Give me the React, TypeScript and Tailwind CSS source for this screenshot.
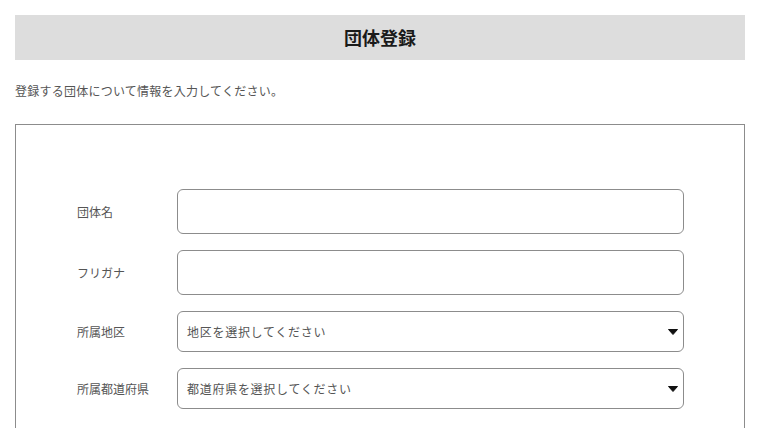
/**
 * Group registration form
 */
const font = { fontFamily: '"Noto Sans CJK JP", "Noto Sans", sans-serif' };

const Caret = () => (
  <svg width="10" height="6" viewBox="0 0 10 6" className="shrink-0">
    <path d="M0.5 0.5 H9.5 L5 5.5 Z" fill="#111" stroke="#111" strokeLinejoin="round" />
  </svg>
);

const TextRow = ({ label }: { label: string }) => (
  <div className="flex items-center">
    <label className="w-[100px] shrink-0 text-[12px] text-[#555]">{label}</label>
    <input
      type="text"
      className="h-[45px] flex-1 rounded-[6px] border border-[#8c8c8c] bg-white px-2 outline-none"
    />
  </div>
);

const SelectRow = ({ label, placeholder }: { label: string; placeholder: string }) => (
  <div className="flex items-center">
    <label className="w-[100px] shrink-0 text-[12px] text-[#555]">{label}</label>
    <div className="flex h-[41px] flex-1 items-center justify-between rounded-[6px] border border-[#8c8c8c] bg-white pl-[9px] pr-[5px]">
      <span className="text-[12px] tracking-[0.06em] text-[#555]">{placeholder}</span>
      <Caret />
    </div>
  </div>
);

export default function App() {
  return (
    <div className="min-h-[428px] bg-white px-[15px] pt-[15px]" style={font}>
      {/* Header */}
      <div className="flex h-[45px] items-center justify-center bg-[#dddddd]">
        <h1 className="text-[18px] font-bold text-[#1a1a1a]">団体登録</h1>
      </div>

      <p className="mt-[22px] text-[12px] leading-[18px] tracking-[0.02em] text-[#555]">
        登録する団体について情報を入力してください。
      </p>

      {/* Form */}
      <div className="mt-[24px] border border-[#8c8c8c] pb-[20px] pl-[61px] pr-[60px] pt-[64px]">
        <div className="flex flex-col gap-[16px]">
          <TextRow label="団体名" />
          <TextRow label="フリガナ" />
          <SelectRow label="所属地区" placeholder="地区を選択してください" />
          <SelectRow label="所属都道府県" placeholder="都道府県を選択してください" />
        </div>
      </div>
    </div>
  );
}
